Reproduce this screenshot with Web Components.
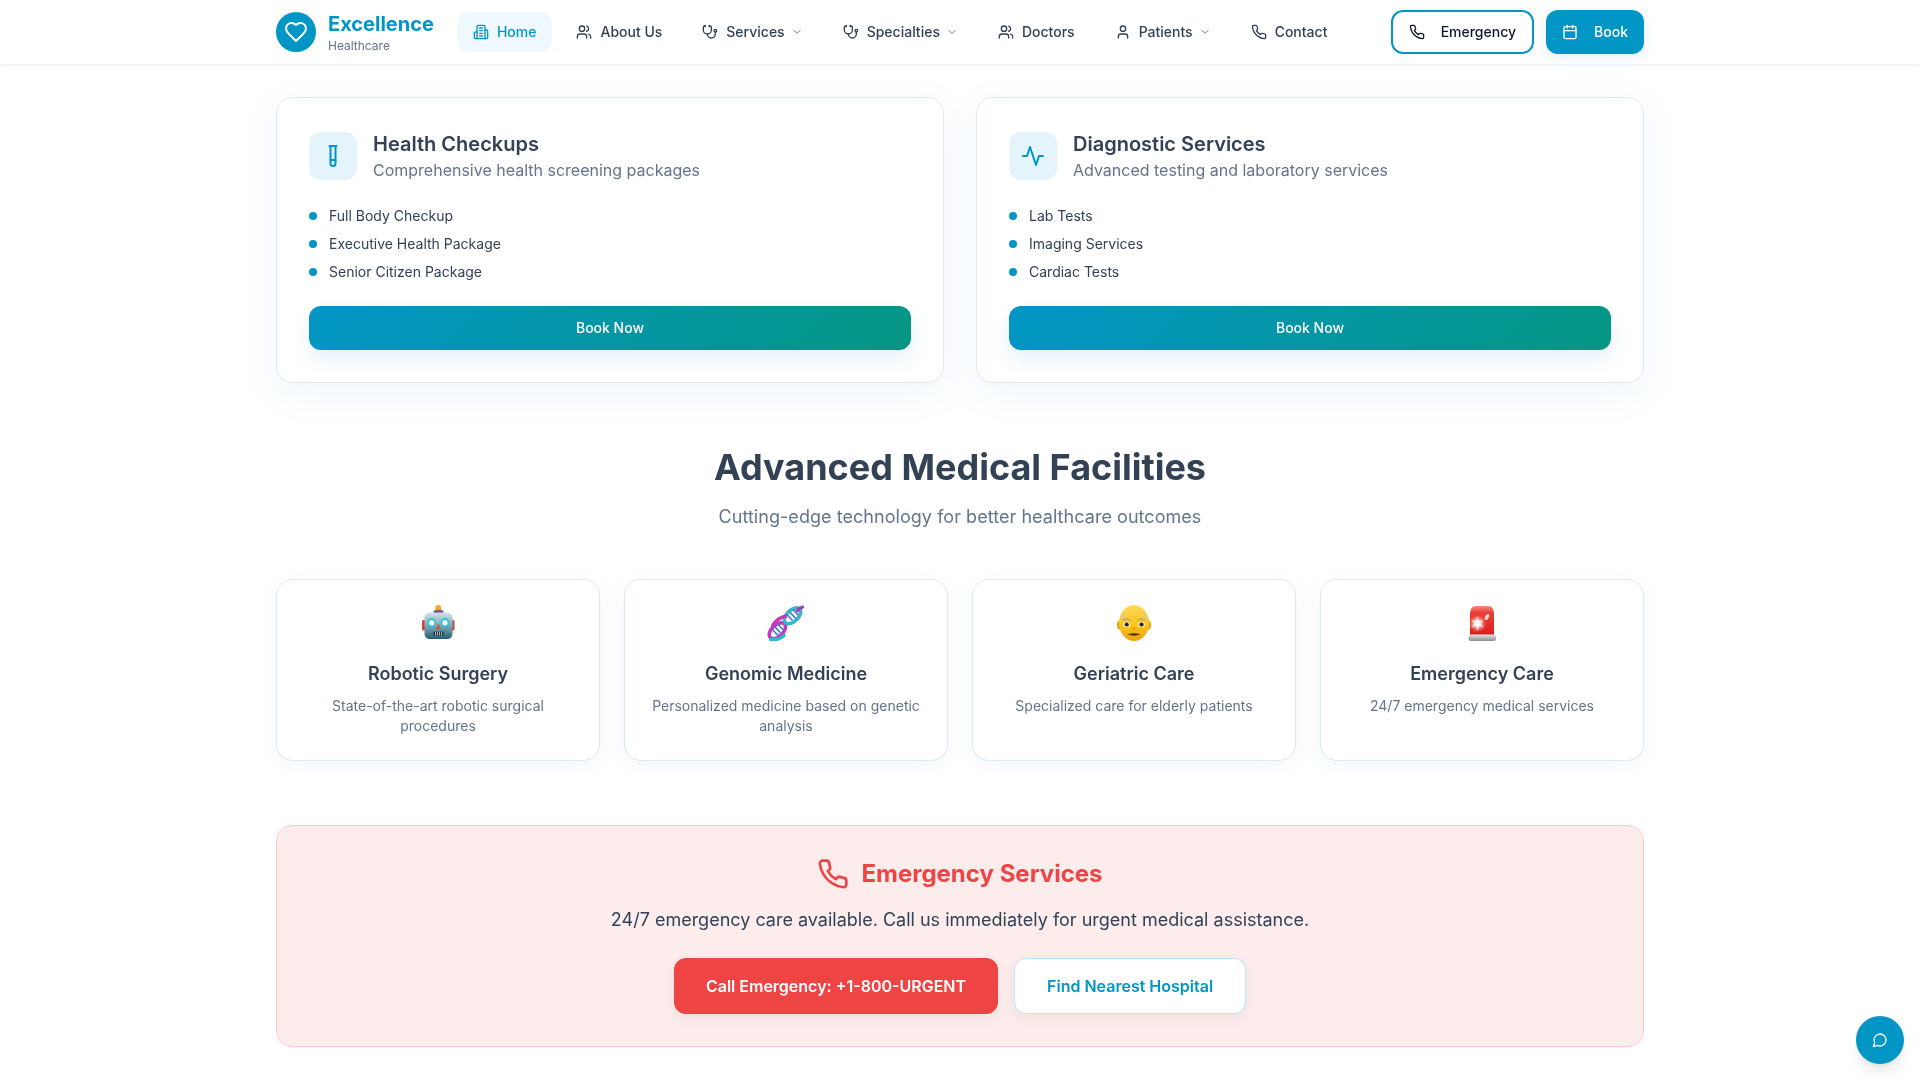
<!DOCTYPE html>
<html lang="en">
<head>
<meta charset="utf-8">
<title>Excellence Healthcare</title>
<style>
  html, body { margin: 0; background: #fff; }
  body { font-family: Inter, "Noto Sans", sans-serif; color: #334155; }
</style>
</head>
<body>
<site-header></site-header>
<page-main>
  <div slot="cards">
    <care-card icon="testTube" heading="Health Checkups" sub="Comprehensive health screening packages" items="Full Body Checkup|Executive Health Package|Senior Citizen Package"></care-card>
    <care-card icon="activity" heading="Diagnostic Services" sub="Advanced testing and laboratory services" items="Lab Tests|Imaging Services|Cardiac Tests"></care-card>
  </div>
  <facility-card slot="facilities" art="robot" label="🤖" heading="Robotic Surgery">State-of-the-art robotic surgical procedures</facility-card>
  <facility-card slot="facilities" art="dna" label="🧬" heading="Genomic Medicine">Personalized medicine based on genetic analysis</facility-card>
  <facility-card slot="facilities" art="elder" label="👴" heading="Geriatric Care">Specialized care for elderly patients</facility-card>
  <facility-card slot="facilities" art="siren" label="🚨" heading="Emergency Care">24/7 emergency medical services</facility-card>
</page-main>
<chat-fab></chat-fab>

<script>
const ICONS = {
  building: '<path d="M6 22V4a2 2 0 0 1 2-2h8a2 2 0 0 1 2 2v18Z"/><path d="M6 12H4a2 2 0 0 0-2 2v6a2 2 0 0 0 2 2h2"/><path d="M18 9h2a2 2 0 0 1 2 2v9a2 2 0 0 1-2 2h-2"/><path d="M10 6h4"/><path d="M10 10h4"/><path d="M10 14h4"/><path d="M10 18h4"/>',
  users: '<path d="M16 21v-2a4 4 0 0 0-4-4H6a4 4 0 0 0-4 4v2"/><circle cx="9" cy="7" r="4"/><path d="M22 21v-2a4 4 0 0 0-3-3.87"/><path d="M16 3.13a4 4 0 0 1 0 7.75"/>',
  stethoscope: '<path d="M11 2v2"/><path d="M5 2v2"/><path d="M5 3H4a2 2 0 0 0-2 2v4a6 6 0 0 0 12 0V5a2 2 0 0 0-2-2h-1"/><path d="M8 15a6 6 0 0 0 12 0v-3"/><circle cx="20" cy="10" r="2"/>',
  user: '<path d="M19 21v-2a4 4 0 0 0-4-4H9a4 4 0 0 0-4 4v2"/><circle cx="12" cy="7" r="4"/>',
  phone: '<path d="M22 16.92v3a2 2 0 0 1-2.18 2 19.79 19.79 0 0 1-8.63-3.07 19.5 19.5 0 0 1-6-6 19.79 19.79 0 0 1-3.07-8.67A2 2 0 0 1 4.11 2h3a2 2 0 0 1 2 1.72 12.84 12.84 0 0 0 .7 2.81 2 2 0 0 1-.45 2.11L8.09 9.91a16 16 0 0 0 6 6l1.27-1.27a2 2 0 0 1 2.11-.45 12.84 12.84 0 0 0 2.81.7A2 2 0 0 1 22 16.92z"/>',
  calendar: '<path d="M8 2v4"/><path d="M16 2v4"/><rect x="3" y="4" width="18" height="18" rx="2"/><path d="M3 10h18"/>',
  heart: '<path d="M19 14c1.49-1.46 3-3.21 3-5.5A5.5 5.5 0 0 0 16.5 3c-1.76 0-3 .5-4.5 2-1.5-1.5-2.74-2-4.5-2A5.5 5.5 0 0 0 2 8.5c0 2.3 1.5 4.05 3 5.5l7 7Z"/>',
  testTube: '<path d="M14.5 2v17.5c0 1.4-1.1 2.5-2.5 2.5s-2.5-1.1-2.5-2.5V2"/><path d="M8.5 2h7"/><path d="M14.5 16h-5"/>',
  activity: '<path d="M22 12h-4l-3 9L9 3l-3 9H2"/>',
  message: '<path d="M7.9 20A9 9 0 1 0 4 16.1L2 22Z"/>',
  chevron: '<path d="m6 9 6 6 6-6"/>'
}

// emoji pictures, drawn on a 42x46 box
const ART = {
  robot: `
    <defs><linearGradient id="h" x1="0" y1="0" x2="0" y2="1"><stop offset="0" stop-color="#d3e3e4"/><stop offset=".5" stop-color="#7fa9b3"/><stop offset="1" stop-color="#235f76"/></linearGradient></defs>
    <g transform="translate(0 .75) scale(1 1.0625)">
      <rect x="5" y="18" width="4" height="10" rx="1.5" fill="#c8443c"/>
      <rect x="33.5" y="18" width="4" height="10" rx="1.5" fill="#c8443c"/>
      <circle cx="21.3" cy="7" r="3" fill="#f5a623"/>
      <rect x="16.5" y="9" width="10" height="3.5" rx="1.5" fill="#6a4c93"/>
      <rect x="7.5" y="11" width="28" height="25" rx="5" fill="url(#h)"/>
      <circle cx="14.7" cy="20.7" r="3.5" fill="#fff" stroke="#22c3e6" stroke-width="1.8"/>
      <circle cx="28" cy="20.7" r="3.5" fill="#fff" stroke="#22c3e6" stroke-width="1.8"/>
      <path d="M21.3 21.5l2.5 5h-5z" fill="#d2504a"/>
      <rect x="16.5" y="29" width="10" height="3.6" rx="1" fill="#16323f"/>
      <path d="M18.5 29v3.6M20.5 29v3.6M22.5 29v3.6M24.5 29v3.6" stroke="#b9c6cc" stroke-width=".9"/>
    </g>`,
  dna: `
    <g transform="translate(-1.22 .89) scale(1.045 1.03)">
      <ellipse cx="13" cy="29" rx="9.5" ry="5.5" transform="rotate(-45 13 29)" fill="#fff" stroke="#c339bd" stroke-width="3.4"/>
      <ellipse cx="27.5" cy="14.5" rx="9.5" ry="5.5" transform="rotate(-45 27.5 14.5)" fill="#fff" stroke="#35b5cd" stroke-width="3.4"/>
      <path d="M10.5 25l5.5 6M8.5 28l5 5.5M13.5 22.5l5 5.5" stroke="#3f7fd6" stroke-width="1.6"/>
      <path d="M25 11l5.5 6M22.500 13.5l5 5.5M28 8.5l5 5.5" stroke="#3f7fd6" stroke-width="1.6"/>
      <path d="M6.500 37.5c4 .5 9-.5 13-4" fill="none" stroke="#35b5cd" stroke-width="3.2" stroke-linecap="round"/>
      <path d="M32 9.5c1-1.500 2.500-3 5-3.500" fill="none" stroke="#a53bb5" stroke-width="3.2" stroke-linecap="round"/>
      <path d="M8.5 24c3-5 7-8 12.5-9" fill="none" stroke="#c339bd" stroke-width="3.4" stroke-linecap="round"/>
    </g>`,
  elder: `
    <defs><linearGradient id="f" x1="0" y1="0" x2="0" y2="1"><stop offset="0" stop-color="#ffdc5a"/><stop offset=".55" stop-color="#fbc51c"/><stop offset="1" stop-color="#efa20c"/></linearGradient></defs>
    <g transform="translate(-2.69 .89) scale(1.115 1.03)">
      <ellipse cx="8.500" cy="23.5" rx="2.5" ry="4.5" fill="#e9a30f"/>
      <ellipse cx="34" cy="23.5" rx="2.5" ry="4.5" fill="#e9a30f"/>
      <ellipse cx="21.3" cy="21.5" rx="13.5" ry="17.5" fill="url(#f)"/>
      <path d="M9.500 17c.5-3 2-5 3.500-6.500-.5 3-1 5-1.500 7zM33 17c-.5-3-2-5-3.500-6.500.5 3 1 5 1.500 7z" fill="#d8c7a0"/>
      <path d="M11.5 18.5q3-1.800 6 0M25 18.5q3-1.800 6 0" fill="none" stroke="#b8a57e" stroke-width="1.3" stroke-linecap="round"/>
      <ellipse cx="14.7" cy="23" rx="3.2" ry="2.6" fill="#fff3c6"/>
      <ellipse cx="28" cy="23" rx="3.2" ry="2.6" fill="#fff3c6"/>
      <circle cx="14.7" cy="23" r="1.9" fill="#2b2018"/>
      <circle cx="28" cy="23" r="1.9" fill="#2b2018"/>
      <ellipse cx="21.3" cy="27" rx="2" ry="1.3" fill="#e8a412"/>
      <path d="M15.5 32.5q5.800-2.200 11.600 0q-5.800 2.600-11.600 0z" fill="#4a3418"/>
    </g>`,
  siren: `
    <defs>
      <linearGradient id="d" x1="0" y1="0" x2="0" y2="1"><stop offset="0" stop-color="#f98a82"/><stop offset=".22" stop-color="#ea3d35"/><stop offset="1" stop-color="#d81f1b"/></linearGradient>
      <linearGradient id="b" x1="0" y1="0" x2="0" y2="1"><stop offset="0" stop-color="#e4e4e4"/><stop offset="1" stop-color="#8d8d8d"/></linearGradient>
      <radialGradient id="g"><stop offset="0" stop-color="#fff"/><stop offset=".35" stop-color="#ffd9d4"/><stop offset="1" stop-color="#ff6a60" stop-opacity="0"/></radialGradient>
    </defs>
    <path d="M9 36V15c0-6 2-9 6-9h12c4 0 6 3 6 9v21z" fill="url(#d)"/>
    <rect x="7.500" y="34.500" width="27.5" height="6.500" rx="2.500" fill="url(#b)"/>
    <circle cx="16.5" cy="23.5" r="9" fill="url(#g)"/>
    <path d="M16.5 15.500l1 6.500 5.500-2.500-4.300 4 4.300 4-5.500-2.300-1 6.300-1-6.300-5.500 2.300 4.300-4-4.300-4 5.500 2.500z" fill="#fff"/>
    <ellipse cx="26" cy="17" rx="1.800" ry="3.300" transform="rotate(30 26 17)" fill="#ffd8d4"/>`
}

class UiIcon extends HTMLElement {
    connectedCallback() {
        const size = this.getAttribute("size") || 16
        const stroke = this.getAttribute("stroke") || 2
        this.attachShadow({ mode: "open" })
        this.shadowRoot.innerHTML = `
      <style>
        :host { display: inline-flex; flex: none; width: ${size}px; height: ${size}px; }
        svg { display: block; }
      </style>
      <svg xmlns="http://www.w3.org/2000/svg" width="${size}" height="${size}" viewBox="0 0 24 24" fill="none" stroke="currentColor" stroke-width="${stroke}" stroke-linecap="round" stroke-linejoin="round">${ICONS[this.getAttribute("name")]}</svg>
    `
    }
}
customElements.define("ui-icon", UiIcon)

class NavLink extends HTMLElement {
    connectedCallback() {
        const menu = this.hasAttribute("menu")
        this.attachShadow({ mode: "open" })
        this.shadowRoot.innerHTML = `
      <style>
        :host {
          display: flex;
          align-items: center;
          gap: 8px;
          height: 40px;
          padding: 0 16px;
          border-radius: 12px;
          font-size: 14px;
          line-height: 20px;
          font-weight: 500;
          color: #334155;
          white-space: nowrap;
        }
        :host([active]) { background: #f0f9ff; color: #0296c7; }
        .chev { color: #64748b; margin-left: -2px; }
      </style>
      <ui-icon name="${this.getAttribute("icon")}"></ui-icon>
      <slot></slot>
      ${menu ? '<ui-icon class="chev" name="chevron" size="12"></ui-icon>' : ""}
    `
    }
}
customElements.define("nav-link", NavLink)

class SiteHeader extends HTMLElement {
    connectedCallback() {
        this.attachShadow({ mode: "open" })
        this.shadowRoot.innerHTML = `
      <style>
        :host {
          display: block;
          position: fixed;
          top: 0;
          left: 0;
          right: 0;
          z-index: 50;
          background: rgba(255, 255, 255, 0.95);
          border-bottom: 1px solid #f1f5f9;
          box-shadow: 0 1px 2px rgba(0, 0, 0, 0.05);
          will-change: transform;
        }
        .bar {
          box-sizing: border-box;
          width: 1368px;
          height: 64px;
          margin: 0 auto;
          display: flex;
          align-items: center;
          justify-content: space-between;
        }
        .left { display: flex; align-items: center; gap: 23px; }
        .logo { display: flex; align-items: center; gap: 12px; }
        .mark {
          width: 40px;
          height: 40px;
          border-radius: 50%;
          background: #0296c7;
          color: #fff;
          display: flex;
          align-items: center;
          justify-content: center;
        }
        .name { font-size: 20px; line-height: 28px; font-weight: 700; color: #0296c7; }
        .tag { font-size: 12px; line-height: 16px; color: #64748b; }
        nav { display: flex; align-items: center; gap: 8px; }
        .actions { display: flex; gap: 12px; }
        .btn {
          box-sizing: border-box;
          height: 44px;
          display: flex;
          align-items: center;
          gap: 16px;
          padding: 0 16px;
          border-radius: 12px;
          font-size: 14px;
          line-height: 20px;
          font-weight: 500;
          white-space: nowrap;
        }
        .outline { border: 2px solid #0296c7; background: #fff; color: #0f172a; }
        .solid { background: #0296c7; color: #fff; box-shadow: 0 4px 12px rgba(2, 150, 199, 0.12); }
      </style>
      <div class="bar">
        <div class="left">
          <div class="logo">
            <div class="mark"><ui-icon name="heart" size="24"></ui-icon></div>
            <div>
              <div class="name">Excellence</div>
              <div class="tag">Healthcare</div>
            </div>
          </div>
          <nav>
            <nav-link icon="building" active>Home</nav-link>
            <nav-link icon="users">About Us</nav-link>
            <nav-link icon="stethoscope" menu>Services</nav-link>
            <nav-link icon="stethoscope" menu>Specialties</nav-link>
            <nav-link icon="users">Doctors</nav-link>
            <nav-link icon="user" menu>Patients</nav-link>
            <nav-link icon="phone">Contact</nav-link>
          </nav>
        </div>
        <div class="actions">
          <div class="btn outline"><ui-icon name="phone"></ui-icon>Emergency</div>
          <div class="btn solid"><ui-icon name="calendar"></ui-icon>Book</div>
        </div>
      </div>
    `
    }
}
customElements.define("site-header", SiteHeader)

class CareCard extends HTMLElement {
    connectedCallback() {
        const items = this.getAttribute("items").split("|")
        this.attachShadow({ mode: "open" })
        this.shadowRoot.innerHTML = `
      <style>
        :host {
          display: block;
          box-sizing: border-box;
          padding: 32px;
          background: #fff;
          border: 1px solid #e0eaf0;
          border-radius: 16px;
          box-shadow: 0 10px 40px rgba(2, 132, 199, 0.07);
        }
        .top { display: flex; align-items: center; gap: 16px; }
        .badge {
          width: 48px;
          height: 48px;
          border-radius: 12px;
          background: #e5f4fa;
          color: #0296c7;
          display: flex;
          align-items: center;
          justify-content: center;
        }
        h3 { margin: 0; font-size: 20px; line-height: 28px; font-weight: 600; color: #334155; }
        p { margin: 0; font-size: 16px; line-height: 24px; color: #64748b; }
        ul { list-style: none; margin: 20px 0 0; padding: 0; }
        li {
          display: flex;
          align-items: center;
          gap: 12px;
          height: 28px;
          font-size: 14px;
          line-height: 20px;
          color: #334155;
        }
        li::before { content: ""; width: 8px; height: 8px; border-radius: 50%; background: #0296c7; }
        .cta {
          margin-top: 20px;
          height: 44px;
          border-radius: 12px;
          display: flex;
          align-items: center;
          justify-content: center;
          background: linear-gradient(135deg, #0296c7, #059682);
          color: #fff;
          font-size: 14px;
          line-height: 20px;
          font-weight: 500;
          box-shadow: 0 10px 20px rgba(2, 132, 199, 0.1);
        }
      </style>
      <div class="top">
        <div class="badge"><ui-icon name="${this.getAttribute("icon")}" size="24"></ui-icon></div>
        <div>
          <h3>${this.getAttribute("heading")}</h3>
          <p>${this.getAttribute("sub")}</p>
        </div>
      </div>
      <ul>${items.map((t) => `<li>${t}</li>`).join("")}</ul>
      <div class="cta">Book Now</div>
    `
    }
}
customElements.define("care-card", CareCard)

class FacilityCard extends HTMLElement {
    connectedCallback() {
        this.attachShadow({ mode: "open" })
        this.shadowRoot.innerHTML = `
      <style>
        :host {
          display: block;
          box-sizing: border-box;
          height: 182px;
          padding: 24px;
          text-align: center;
          background: #fff;
          border: 1px solid #dde8ef;
          border-radius: 16px;
          box-shadow: 0 4px 20px rgba(2, 132, 199, 0.06);
        }
        svg { display: block; margin: 0 auto; overflow: visible; }
        h4 { margin: 16px 0 8px; font-size: 18px; line-height: 28px; font-weight: 600; color: #334155; }
        p { margin: 0; font-size: 14px; line-height: 20px; color: #64748b; }
      </style>
      <svg xmlns="http://www.w3.org/2000/svg" role="img" aria-label="${this.getAttribute("label")}" width="42" height="40" viewBox="0 4 42 40">${ART[this.getAttribute("art")]}</svg>
      <h4>${this.getAttribute("heading")}</h4>
      <p><slot></slot></p>
    `
    }
}
customElements.define("facility-card", FacilityCard)

class EmergencyPanel extends HTMLElement {
    connectedCallback() {
        this.attachShadow({ mode: "open" })
        this.shadowRoot.innerHTML = `
      <style>
        :host {
          display: block;
          box-sizing: border-box;
          height: 222px;
          padding: 32px;
          text-align: center;
          background: #fdecec;
          border: 1px solid #fecaca;
          border-radius: 16px;
        }
        .title {
          display: flex;
          align-items: center;
          justify-content: center;
          gap: 12px;
          font-size: 24px;
          line-height: 32px;
          font-weight: 700;
          color: #ef4444;
        }
        p { margin: 16px 0 24px; font-size: 18px; line-height: 28px; color: #334155; }
        .row { display: flex; justify-content: center; gap: 16px; }
        .btn {
          box-sizing: border-box;
          height: 56px;
          padding: 0 32px;
          display: flex;
          align-items: center;
          border-radius: 12px;
          font-size: 16px;
          line-height: 24px;
          font-weight: 600;
          box-shadow: 0 4px 14px rgba(0, 0, 0, 0.06);
        }
        .red { background: #ef4444; color: #fff; }
        .white { background: #fff; color: #0296c7; border: 1px solid #bae6fd; }
      </style>
      <div class="title"><ui-icon name="phone" size="32"></ui-icon>Emergency Services</div>
      <p>24/7 emergency care available. Call us immediately for urgent medical assistance.</p>
      <div class="row">
        <div class="btn red">Call Emergency: +1-800-URGENT</div>
        <div class="btn white">Find Nearest Hospital</div>
      </div>
    `
    }
}
customElements.define("emergency-panel", EmergencyPanel)

class PageMain extends HTMLElement {
    connectedCallback() {
        this.attachShadow({ mode: "open" })
        this.shadowRoot.innerHTML = `
      <style>
        :host { display: block; width: 1368px; margin: 0 auto; padding-top: 97px; will-change: transform; }
        ::slotted([slot="cards"]) { display: grid; grid-template-columns: 1fr 1fr; gap: 32px; }
        .head { text-align: center; margin-top: 64px; }
        h2 { margin: 0; font-size: 36px; line-height: 40px; font-weight: 700; color: #334155; }
        .head p { margin: 16px 0 0; font-size: 18px; line-height: 28px; color: #64748b; letter-spacing: 0.045px; }
        .grid { display: grid; grid-template-columns: repeat(4, 1fr); gap: 24px; margin: 48px 0 64px; }
      </style>
      <slot name="cards"></slot>
      <div class="head">
        <h2>Advanced Medical Facilities</h2>
        <p>Cutting-edge technology for better healthcare outcomes</p>
      </div>
      <div class="grid"><slot name="facilities"></slot></div>
      <emergency-panel></emergency-panel>
    `
    }
}
customElements.define("page-main", PageMain)

class ChatFab extends HTMLElement {
    connectedCallback() {
        this.attachShadow({ mode: "open" })
        this.shadowRoot.innerHTML = `
      <style>
        :host {
          position: fixed;
          right: 16px;
          bottom: 16px;
          width: 48px;
          height: 48px;
          border-radius: 50%;
          display: flex;
          align-items: center;
          justify-content: center;
          background: #0296c7;
          color: #fff;
          box-shadow: 0 10px 15px -3px rgba(0, 0, 0, 0.1), 0 4px 6px -4px rgba(0, 0, 0, 0.1);
        }
      </style>
      <ui-icon name="message"></ui-icon>
    `
    }
}
customElements.define("chat-fab", ChatFab)
</script>
</body>
</html>
